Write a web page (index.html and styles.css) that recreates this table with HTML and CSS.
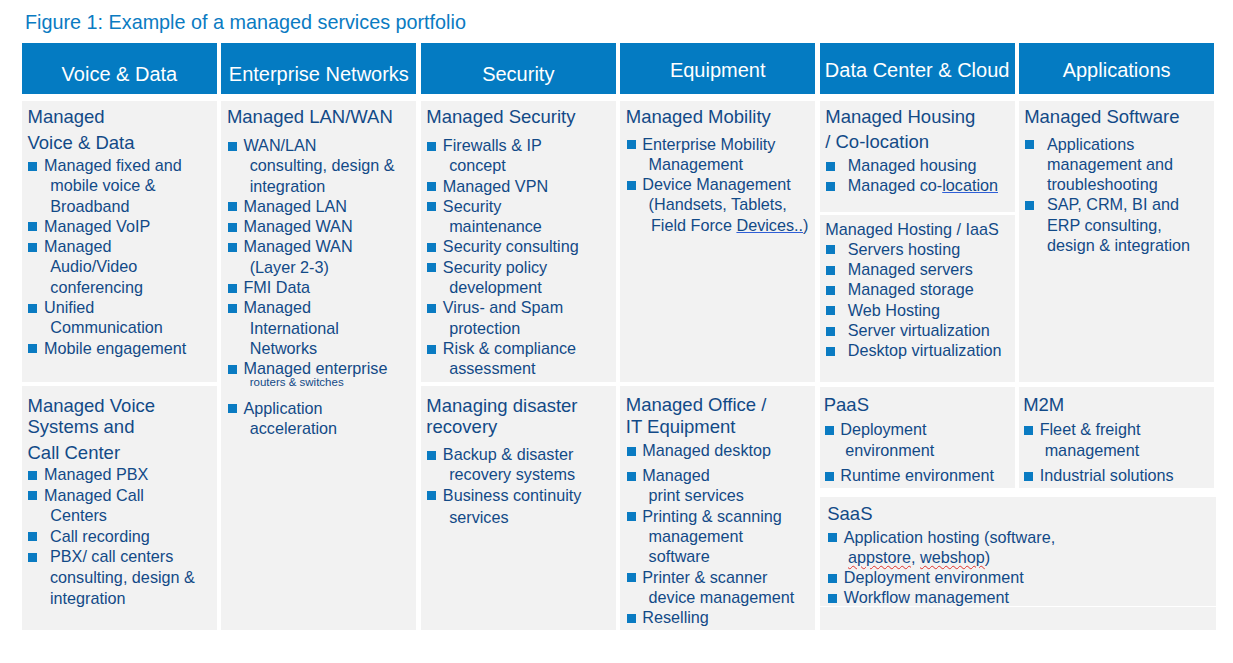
FILE: index.html
```html
<!DOCTYPE html>
<html>
<head>
<meta charset="utf-8">
<title>Managed services portfolio</title>
<link rel="stylesheet" href="styles.css">
</head>
<body>
<div class="page">
  <h1 class="title">Figure 1: Example of a managed services portfolio</h1>

  <div class="heads">
    <div class="hd low">Voice &amp; Data</div>
    <div class="hd low">Enterprise Networks</div>
    <div class="hd low">Security</div>
    <div class="hd">Equipment</div>
    <div class="hd">Data Center &amp; Cloud</div>
    <div class="hd">Applications</div>
  </div>

  <div class="grid">
    <!-- Column 1, row 1 -->
    <div class="cell c1a">
      <div class="h">Managed<br>Voice &amp; Data</div>
      <ul class="list">
        <li class="li"><i class="sq"></i><span class="t">Managed fixed and<br>mobile voice &amp;<br>Broadband</span></li>
        <li class="li"><i class="sq"></i><span class="t">Managed VoIP</span></li>
        <li class="li"><i class="sq"></i><span class="t">Managed<br>Audio/Video<br>conferencing</span></li>
        <li class="li"><i class="sq"></i><span class="t">Unified<br>Communication</span></li>
        <li class="li"><i class="sq"></i><span class="t">Mobile engagement</span></li>
      </ul>
    </div>

    <!-- Column 2, both rows -->
    <div class="cell c2">
      <div class="h">Managed LAN/WAN</div>
      <ul class="list">
        <li class="li"><i class="sq"></i><span class="t">WAN/LAN<br>consulting, design &amp;<br>integration</span></li>
        <li class="li"><i class="sq"></i><span class="t">Managed LAN</span></li>
        <li class="li"><i class="sq"></i><span class="t">Managed WAN</span></li>
        <li class="li"><i class="sq"></i><span class="t">Managed WAN<br>(Layer 2-3)</span></li>
        <li class="li"><i class="sq"></i><span class="t">FMI Data</span></li>
        <li class="li"><i class="sq"></i><span class="t">Managed<br>International<br>Networks</span></li>
        <li class="li"><i class="sq"></i><span class="t">Managed enterprise<span class="small">routers &amp; switches</span></span></li>
        <li class="li app"><i class="sq"></i><span class="t">Application<br>acceleration</span></li>
      </ul>
    </div>

    <!-- Column 3, row 1 -->
    <div class="cell c3a">
      <div class="h">Managed Security</div>
      <ul class="list">
        <li class="li"><i class="sq"></i><span class="t">Firewalls &amp; IP<br>concept</span></li>
        <li class="li"><i class="sq"></i><span class="t">Managed VPN</span></li>
        <li class="li"><i class="sq"></i><span class="t">Security<br>maintenance</span></li>
        <li class="li"><i class="sq"></i><span class="t">Security consulting</span></li>
        <li class="li"><i class="sq"></i><span class="t">Security policy<br>development</span></li>
        <li class="li"><i class="sq"></i><span class="t">Virus- and Spam<br>protection</span></li>
        <li class="li"><i class="sq"></i><span class="t">Risk &amp; compliance<br>assessment</span></li>
      </ul>
    </div>

    <!-- Column 4, row 1 -->
    <div class="cell c4a">
      <div class="h">Managed Mobility</div>
      <ul class="list">
        <li class="li"><i class="sq"></i><span class="t">Enterprise Mobility<br>Management</span></li>
        <li class="li"><i class="sq"></i><span class="t">Device Management<br>(Handsets, Tablets,<br><span class="nudge">Field Force <span class="lnk">Devices..</span>)</span></span></li>
      </ul>
    </div>

    <!-- Column 5, row 1 -->
    <div class="stack">
      <div class="cell c5a">
        <div class="h">Managed Housing<br>/ Co-location</div>
        <ul class="list tab">
          <li class="li"><i class="sq"></i><span class="t">Managed housing</span></li>
          <li class="li"><i class="sq"></i><span class="t">Managed co-<span class="lnk">location</span></span></li>
        </ul>
      </div>
      <div class="cell c5b">
        <div class="h hs">Managed Hosting / IaaS</div>
        <ul class="list tab">
          <li class="li"><i class="sq"></i><span class="t">Servers hosting</span></li>
          <li class="li"><i class="sq"></i><span class="t">Managed servers</span></li>
          <li class="li"><i class="sq"></i><span class="t">Managed storage</span></li>
          <li class="li"><i class="sq"></i><span class="t">Web Hosting</span></li>
          <li class="li"><i class="sq"></i><span class="t">Server virtualization</span></li>
          <li class="li"><i class="sq"></i><span class="t">Desktop virtualization</span></li>
        </ul>
      </div>
    </div>

    <!-- Column 6, row 1 -->
    <div class="cell c6a">
      <div class="h">Managed Software</div>
      <ul class="list tab">
        <li class="li"><i class="sq"></i><span class="t">Applications<br>management and<br>troubleshooting</span></li>
        <li class="li"><i class="sq"></i><span class="t">SAP, CRM, BI and<br>ERP consulting,<br>design &amp; integration</span></li>
      </ul>
    </div>

    <!-- Column 1, row 2 -->
    <div class="cell c1b">
      <div class="h">Managed Voice<br>Systems and</div>
      <div class="h h2">Call Center</div>
      <ul class="list">
        <li class="li"><i class="sq"></i><span class="t">Managed PBX</span></li>
        <li class="li"><i class="sq"></i><span class="t">Managed Call<br>Centers</span></li>
        <li class="li tabli"><i class="sq"></i><span class="t">Call recording</span></li>
        <li class="li tabli"><i class="sq"></i><span class="t">PBX/ call centers<br>consulting, design &amp;<br>integration</span></li>
      </ul>
    </div>

    <!-- Column 3, row 2 -->
    <div class="cell c3b">
      <div class="h">Managing disaster<br>recovery</div>
      <ul class="list">
        <li class="li"><i class="sq"></i><span class="t">Backup &amp; disaster<br>recovery systems</span></li>
        <li class="li"><i class="sq"></i><span class="t">Business continuity<span class="brk">services</span></span></li>
      </ul>
    </div>

    <!-- Column 4, row 2 -->
    <div class="cell c4b">
      <div class="h">Managed Office /<br>IT Equipment</div>
      <ul class="list">
        <li class="li first"><i class="sq"></i><span class="t">Managed desktop</span></li>
        <li class="li"><i class="sq"></i><span class="t">Managed<br>print services</span></li>
        <li class="li"><i class="sq"></i><span class="t">Printing &amp; scanning<br>management<br>software</span></li>
        <li class="li"><i class="sq"></i><span class="t">Printer &amp; scanner<br>device management</span></li>
        <li class="li"><i class="sq"></i><span class="t">Reselling</span></li>
      </ul>
    </div>

    <!-- Columns 5-6, row 2 -->
    <div class="cloud">
      <div class="pair">
        <div class="cell small-cell">
          <div class="h">PaaS</div>
          <ul class="list">
            <li class="li"><i class="sq"></i><span class="t">Deployment<br>environment</span></li>
            <li class="li"><i class="sq"></i><span class="t">Runtime environment</span></li>
          </ul>
        </div>
        <div class="cell small-cell">
          <div class="h">M2M</div>
          <ul class="list">
            <li class="li"><i class="sq"></i><span class="t">Fleet &amp; freight<br>management</span></li>
            <li class="li"><i class="sq"></i><span class="t">Industrial solutions</span></li>
          </ul>
        </div>
      </div>
      <div class="saas">
        <div class="saas-body">
          <div class="h">SaaS</div>
          <ul class="list">
            <li class="li"><i class="sq"></i><span class="t">Application hosting (software,<br><span class="sp">appstore</span>, <span class="sp">webshop</span>)</span></li>
            <li class="li"><i class="sq"></i><span class="t">Deployment environment</span></li>
            <li class="li"><i class="sq"></i><span class="t">Workflow management</span></li>
          </ul>
        </div>
        <div class="saas-foot"></div>
      </div>
    </div>
  </div>
</div>
</body>
</html>
```

FILE: styles.css
```css
* {
  box-sizing: border-box;
  margin: 0;
  padding: 0;
}

body {
  margin: 0;
  background: #ffffff;
  font-family: "Liberation Sans", Arial, Helvetica, sans-serif;
  color: #124a87;
}

.page {
  padding: 10px 0 0 22px;
  width: 1233px;
}

.title {
  font-size: 19.8px;
  line-height: 24px;
  font-weight: normal;
  color: #0a7bc2;
  padding-left: 3px;
  height: 33px;
  white-space: nowrap;
}

/* ---------- Header row ---------- */
.heads {
  display: grid;
  grid-template-columns: repeat(6, 1fr);
  column-gap: 4.6px;
  width: 1192px;
  height: 51px;
}

.hd {
  background: #047bc2;
  color: #ffffff;
  font-size: 20px;
  line-height: 24px;
  text-align: center;
  white-space: nowrap;
  padding-top: 14.6px;
}

.hd.low {
  padding-top: 18.6px;
}

/* ---------- Body grid ---------- */
.grid {
  margin-top: 7px;
  display: grid;
  grid-template-columns: repeat(6, 1fr);
  grid-template-rows: 281px 244px;
  gap: 4px 4.6px;
  width: 1192px;
}

.cell {
  background: #f2f2f2;
  padding-left: 5.5px;
  white-space: nowrap;
}

.c1a {
  grid-column: 1;
  grid-row: 1;
}

.c2 {
  grid-column: 2;
  grid-row: 1 / span 2;
}

.stack {
  display: flex;
  flex-direction: column;
  gap: 3px;
}

.cloud {
  grid-column: 5 / span 2;
  margin-top: 1px;
}

.pair {
  display: grid;
  grid-template-columns: 1fr 1fr;
  column-gap: 4.6px;
  height: 101px;
}

/* ---------- Typography ---------- */
.h {
  font-size: 18.5px;
  line-height: 26px;
}

.h.hs {
  font-size: 16.2px;
  line-height: 20.3px;
}

.list {
  list-style: none;
}

.li {
  display: flex;
  align-items: flex-start;
  font-size: 16.2px;
  line-height: 20.3px;
}

.sq {
  flex: none;
  display: block;
  width: 9px;
  height: 9px;
  background: #0a7bc2;
  margin: 6.6px 6.7px 0 0.8px;
}

.t {
  display: block;
  padding-left: 6.3px;
  text-indent: -6.3px;
}

.tab .t,
.tabli .t {
  padding-left: 0;
  text-indent: 0;
  margin-left: 6px;
}

.small {
  display: block;
  font-size: 11.5px;
  line-height: 12px;
  margin-top: -3px;
  text-indent: 0;
}

.brk {
  display: block;
  margin-top: 2.5px;
  text-indent: 0;
}

.nudge {
  padding-left: 2.4px;
}

.lnk {
  text-decoration: underline;
  text-decoration-color: #2f5fd8;
  text-decoration-thickness: 1px;
  text-underline-offset: 1px;
}

.sp {
  text-decoration: underline wavy #e0302a;
  text-decoration-thickness: 1px;
  text-underline-offset: 2px;
}

/* ---------- Per-cell vertical tuning ---------- */
.c1a { padding-top: 3px; }
.c1a .h { margin-bottom: -1px; }

.c2 { padding-top: 3px; }
.c2 .h { margin-bottom: 5px; }
.c2 .app { margin-top: 10px; }

.c3a { padding-top: 3px; }
.c3a .h { margin-bottom: 5px; }

.c4a { padding-top: 3px; }
.c4a .h { margin-bottom: 3.5px; }

.c5a { height: 111px; padding-top: 3.3px; }
.c5a .h { line-height: 25px; margin-bottom: 0.8px; }

.c5b { flex: 1; padding-top: 3.5px; }

.c6a { padding-top: 3px; padding-left: 5px; }
.c6a .h { margin-bottom: 3.5px; }
.c6a .t { margin-left: 6.3px; }

.c1b { padding-top: 9.3px; }
.c1b .h { line-height: 21px; }
.c1b .h2 { margin-top: 5px; margin-bottom: 0.8px; }
.c1b .li { line-height: 20.6px; }

.c3b { padding-top: 9.3px; }
.c3b .h { line-height: 21px; margin-bottom: 6.8px; }

.c4b { padding-top: 7.9px; }
.c4b .h { line-height: 22.4px; margin-bottom: 1.4px; }
.c4b .first { margin-bottom: 4.7px; }

.small-cell { padding-top: 5px; padding-left: 4px; }
.small-cell .h { margin-bottom: 0.7px; }
.small-cell .li { line-height: 21px; }
.small-cell .sq { margin-top: 7px; }
.small-cell .li + .li { margin-top: 4px; }
.small-cell .t { padding-left: 5px; text-indent: -5px; }

/* ---------- SaaS block ---------- */
.saas {
  margin-top: 9px;
  margin-right: -2px;
  margin-left: 0;
}

.saas-body {
  background: #f2f2f2;
  height: 110px;
  overflow: hidden;
  padding: 3.5px 0 0 7.5px;
  border-bottom: 1px solid #ffffff;
  white-space: nowrap;
}

.saas-body .h {
  margin-bottom: 0;
}

.saas-body .t {
  padding-left: 4.3px;
  text-indent: -4.3px;
}

.saas-foot {
  background: #f2f2f2;
  height: 26px;
}
```
